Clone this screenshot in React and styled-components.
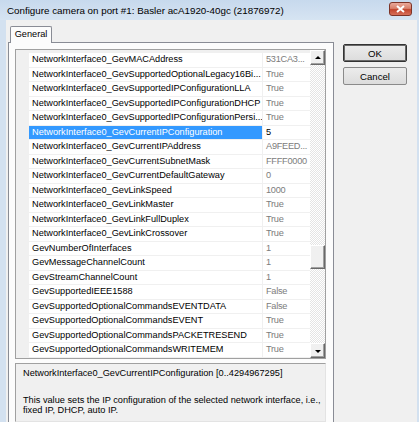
import React from "react";
import styled, { createGlobalStyle } from "styled-components";

const GlobalStyle = createGlobalStyle`
  html, body {
    margin: 0;
    padding: 0;
    background: #f0f0f0;
  }
`;

const FONT = `"Liberation Sans", Arial, sans-serif`;

const Window = styled.div`
  width: 419px;
  height: 422px;
  display: flex;
  flex-direction: column;
  background: #d3e1f0;
  overflow: hidden;
  font-family: ${FONT};
  color: #000;
`;

const TitleBar = styled.div`
  height: 20px;
  flex: none;
  display: flex;
  align-items: center;
  justify-content: space-between;
  padding: 0 7px;
  background: linear-gradient(#c7d9ed, #d6e4f2);
`;

const TitleText = styled.div`
  font-size: 9.8px;
  white-space: nowrap;
`;

const CloseButton = styled.div`
  width: 23px;
  height: 14px;
  margin-top: -2px;
  box-sizing: border-box;
  border: 1px solid #7d3427;
  border-radius: 3px;
  background: linear-gradient(#e9a99a 0%, #d8806b 45%, #c2452d 55%, #d7705a 100%);
  display: flex;
  align-items: center;
  justify-content: center;

  svg {
    display: block;
  }
`;

const Frame = styled.div`
  flex: 1;
  display: flex;
  padding: 0 2px 0 6px;
  min-height: 0;
`;

const Client = styled.div`
  flex: 1;
  display: flex;
  background: #f0f0f0;
  padding: 6px 0 0 2px;
  min-height: 0;
`;

const TabControl = styled.div`
  width: 326px;
  display: flex;
  flex-direction: column;
`;

const TabStrip = styled.div`
  height: 16px;
  flex: none;
  display: flex;
  align-items: flex-end;
  padding-left: 2px;
`;

const Tab = styled.div`
  position: relative;
  z-index: 1;
  width: 42px;
  height: 17px;
  margin-bottom: -1px;
  box-sizing: border-box;
  border: 1px solid #898c95;
  border-bottom: none;
  border-radius: 2px 2px 0 0;
  background: #fcfcfc;
  font-size: 9.2px;
  line-height: 15px;
  text-align: center;
`;

const TabPage = styled.div`
  flex: 1;
  display: flex;
  flex-direction: column;
  box-sizing: border-box;
  border: 1px solid #898c95;
  border-bottom: none;
  background: #fcfcfc;
  padding: 6px 7px 0 6px;
  min-height: 0;
`;

const Grid = styled.div`
  height: 310px;
  flex: none;
  box-sizing: border-box;
  border: 1px solid #a0a0a0;
  display: flex;
  background: #f0f0f0;
`;

const Rows = styled.div`
  flex: 1;
  padding-top: 3px;
  overflow: hidden;
`;

const Row = styled.div`
  display: grid;
  grid-template-columns: 13px 234px 1fr;
  height: 14.5px;
  font-size: 9.2px;
`;

const Gutter = styled.div`
  background: #f0f0f0;
`;

const NameCell = styled.div`
  box-sizing: border-box;
  border-bottom: 1px solid #f0f0f0;
  border-right: 1px solid #f0f0f0;
  background: ${p => (p.$selected ? "#3399ff" : "#fff")};
  color: ${p => (p.$selected ? "#fff" : "#000")};
  padding-left: 3px;
  line-height: 13.5px;
  white-space: nowrap;
  overflow: hidden;
`;

const ValueCell = styled.div`
  box-sizing: border-box;
  border-bottom: 1px solid #f0f0f0;
  background: #fff;
  color: ${p => (p.$editable ? "#000" : "#7c7c7c")};
  padding-left: 3px;
  line-height: 13.5px;
  letter-spacing: -0.25px;
  white-space: nowrap;
  overflow: hidden;
`;

const ScrollBar = styled.div`
  width: 15px;
  flex: none;
  display: flex;
  flex-direction: column;
  background-color: #fff;
  background-image: repeating-conic-gradient(#e4e4e4 0 25%, #fff 0 50%);
  background-size: 2px 2px;
`;

const ScrollButton = styled.div`
  height: 15px;
  flex: none;
  box-sizing: border-box;
  background: #f0f0f0;
  border: 1px solid;
  border-color: #fff #696969 #696969 #fff;
  box-shadow: inset -1px -1px 0 #a0a0a0;
  display: flex;
  align-items: center;
  justify-content: center;
`;

const Arrow = styled.div`
  width: 0;
  height: 0;
  border-left: 3px solid transparent;
  border-right: 3px solid transparent;
  ${p =>
    p.$down
      ? "border-top: 3px solid #000; margin-top: 1px;"
      : "border-bottom: 3px solid #000; margin-bottom: 1px;"}
`;

const Track = styled.div`
  flex: 1;
  display: flex;
  flex-direction: column;
`;

const Thumb = styled.div`
  height: 24px;
  margin-top: 180px;
  box-sizing: border-box;
  background: #f0f0f0;
  border: 1px solid;
  border-color: #fff #696969 #696969 #fff;
  box-shadow: inset -1px -1px 0 #a0a0a0;
`;

const Description = styled.div`
  flex: 1;
  margin-top: 4px;
  box-sizing: border-box;
  border: 1px solid;
  border-color: #a0a0a0 #e3e3e3 #e3e3e3 #a0a0a0;
  background: #f0f0f0;
  padding: 4px 7px;
  font-size: 9.2px;
  line-height: 10.5px;
`;

const DescTitle = styled.div`
  white-space: nowrap;
`;

const DescText = styled.div`
  margin-top: 16px;
  margin-right: -10px;
`;

const ButtonColumn = styled.div`
  display: flex;
  flex-direction: column;
  gap: 5px;
  margin-left: 9px;
  padding-top: 18px;
`;

const Button = styled.div`
  width: 64px;
  height: 18px;
  box-sizing: border-box;
  border: 1px solid ${p => (p.$default ? "#333" : "#8a8a8a")};
  box-shadow: ${p => (p.$default ? "inset 0 0 0 1px #6a6a6a" : "none")};
  border-radius: 2px;
  background: linear-gradient(#ececec, #dcdcdc);
  font-size: 9.6px;
  display: flex;
  align-items: center;
  justify-content: center;
`;

const properties = [
  ["NetworkInterface0_GevMACAddress", "531CA3..."],
  ["NetworkInterface0_GevSupportedOptionalLegacy16Bi...", "True"],
  ["NetworkInterface0_GevSupportedIPConfigurationLLA", "True"],
  ["NetworkInterface0_GevSupportedIPConfigurationDHCP", "True"],
  ["NetworkInterface0_GevSupportedIPConfigurationPersi...", "True"],
  ["NetworkInterface0_GevCurrentIPConfiguration", "5", true],
  ["NetworkInterface0_GevCurrentIPAddress", "A9FEED..."],
  ["NetworkInterface0_GevCurrentSubnetMask", "FFFF0000"],
  ["NetworkInterface0_GevCurrentDefaultGateway", "0"],
  ["NetworkInterface0_GevLinkSpeed", "1000"],
  ["NetworkInterface0_GevLinkMaster", "True"],
  ["NetworkInterface0_GevLinkFullDuplex", "True"],
  ["NetworkInterface0_GevLinkCrossover", "True"],
  ["GevNumberOfInterfaces", "1"],
  ["GevMessageChannelCount", "1"],
  ["GevStreamChannelCount", "1"],
  ["GevSupportedIEEE1588", "False"],
  ["GevSupportedOptionalCommandsEVENTDATA", "False"],
  ["GevSupportedOptionalCommandsEVENT", "True"],
  ["GevSupportedOptionalCommandsPACKETRESEND", "True"],
  ["GevSupportedOptionalCommandsWRITEMEM", "True"],
];

const App = () => {
  return (
    <>
      <GlobalStyle />
      <Window>
        <TitleBar>
          <TitleText>Configure camera on port #1: Basler acA1920-40gc (21876972)</TitleText>
          <CloseButton>
            <svg width="9" height="8" viewBox="0 0 9 8">
              <path d="M1 1 L8 7 M8 1 L1 7" stroke="#fff" strokeWidth="2" />
            </svg>
          </CloseButton>
        </TitleBar>
        <Frame>
          <Client>
            <TabControl>
              <TabStrip>
                <Tab>General</Tab>
              </TabStrip>
              <TabPage>
                <Grid>
                  <Rows>
                    {properties.map(([name, value, selected]) => (
                      <Row key={name}>
                        <Gutter />
                        <NameCell $selected={selected}>{name}</NameCell>
                        <ValueCell $editable={selected}>{value}</ValueCell>
                      </Row>
                    ))}
                  </Rows>
                  <ScrollBar>
                    <ScrollButton>
                      <Arrow />
                    </ScrollButton>
                    <Track>
                      <Thumb />
                    </Track>
                    <ScrollButton>
                      <Arrow $down />
                    </ScrollButton>
                  </ScrollBar>
                </Grid>
                <Description>
                  <DescTitle>NetworkInterface0_GevCurrentIPConfiguration [0..4294967295]</DescTitle>
                  <DescText>
                    This value sets the IP configuration of the selected network interface, i.e.,
                    fixed IP, DHCP, auto IP.
                  </DescText>
                </Description>
              </TabPage>
            </TabControl>
            <ButtonColumn>
              <Button $default>OK</Button>
              <Button>Cancel</Button>
            </ButtonColumn>
          </Client>
        </Frame>
      </Window>
    </>
  );
};

export default App;
